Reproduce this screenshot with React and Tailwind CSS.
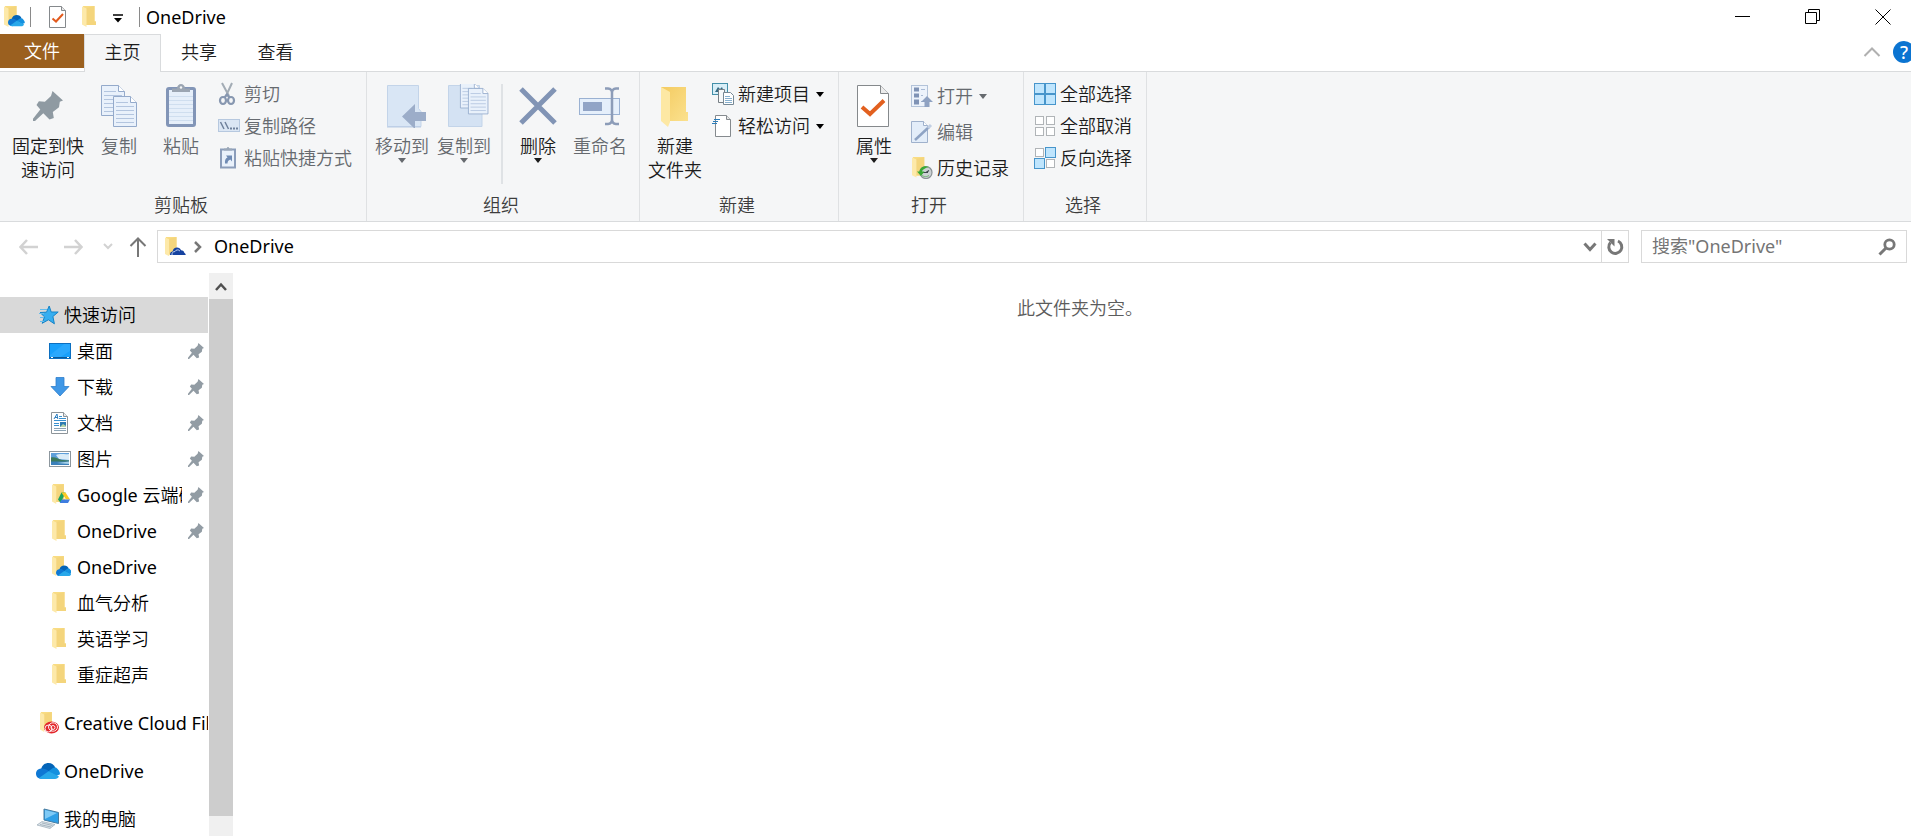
import React from "react";

/* ---------- shared shapes ---------- */

function FolderShape({ x = 0, y = 0, s = 1 }) {
  return (
    <g transform={`translate(${x} ${y}) scale(${s})`}>
      <path d="M1 0h11.500v15.500h1.500v3.500H4z" fill="#f9dc83" />
      <path d="M4 2l8.500-2v15.500h1.500v3.500H4z" fill="#f4d57c" />
      <path d="M0 0.500L4.500 2.500V21L0 18.500z" fill="#fde9a9" />
    </g>
  );
}

function CloudShape({ x = 0, y = 0, s = 1 }) {
  return (
    <g transform={`translate(${x} ${y}) scale(${s})`}>
      <path d="M5 6.500C6 2 9 0 12.500 0c3.200 0 5.600 1.700 6.800 4.600L13 9z" fill="#0364b8" />
      <path d="M5 5.500c2.500-.4 4.500.5 6.500 1.700L17 10.500 6 16c-3.800 0-6-2.200-6-5.200C0 7.800 2.200 5.700 5 5.500z" fill="#0f78d4" />
      <path d="M12.500 8.200l4-3c1-.7 2.300-.9 3.500-.6 2.300 2 4 3.900 4 6.700l-4 2z" fill="#1490df" />
      <path d="M3 15l9.500-6.800L23 13.500c-.8 1.600-2.200 2.500-4 2.500H6c-1.200 0-2.200-.4-3-1z" fill="#28a8ea" />
    </g>
  );
}

function PinShape({ fill = "#8f9aa2" }) {
  return <path d="M19.500 0L30 9.500l-3.200 1.300-.8 5.500-6.200 4.800 1 6-4.300 1.400-6.200-6.300L2 30H0v-2.200l7.300-9.300L3.500 14l2.400-3.800 6 .5L18 5z" fill={fill} />;
}

/* ---------- small icons (22px) ---------- */

const FolderIcon = () => (
  <svg width="22" height="22" viewBox="0 0 22 22" aria-hidden="true" className="shrink-0"><FolderShape x={3} y={0} /></svg>
);
const OneDriveFolderIcon = () => (
  <svg width="22" height="22" viewBox="0 0 22 22" aria-hidden="true" className="shrink-0"><FolderShape x={3} y={0} s={0.95} /><CloudShape x={7} y={9.500} s={0.66} /></svg>
);
const AddressIcon = () => (
  <svg width="22" height="22" viewBox="0 0 22 22" aria-hidden="true" className="shrink-0">
    <FolderShape x={1} y={1} s={0.92} />
    <path d="M6 18.500c0-2 1.300-3 2.600-3 .4-2.500 2-4 4.400-4 2 0 3.300 1 4 2.700 2 0 3.200 1.300 3.400 2.700.8.300 1.300 1 1.300 2H6z" fill="#1542a0" />
    <path d="M8 19c-.2-2 1-3.600 2.900-3.400.8-2 3.800-2.300 5-.6" fill="none" stroke="#d5e3fa" strokeWidth="0.900" />
  </svg>
);
const DriveFolderIcon = () => (
  <svg width="22" height="22" viewBox="0 0 22 22" aria-hidden="true" className="shrink-0">
    <FolderShape x={3} y={0} s={0.95} />
    <path d="M12.500 8.500h4L11.700 19 9 15.500z" fill="#1ea362" />
    <path d="M12.500 8.500h4l4.500 7h-4z" fill="#fbc926" />
    <path d="M10.600 19l2.200-3.500H21L19 19z" fill="#3f7de0" />
  </svg>
);
const StarIcon = () => (
  <svg width="22" height="22" viewBox="0 0 22 22" aria-hidden="true" className="shrink-0">
    <path d="M12.200 2l2 6h7l-5.300 4.500 1.500 7.300-6-4-6.200 3.500 2.300-6.500L3 8.500l6.500-.3z" fill="#36aef0" stroke="#1583c6" strokeWidth="1" />
    <path d="M3 5.500h7M2 9.500h5M3 13.500h4M3 17.500h4" stroke="#66bdec" strokeWidth="1" />
  </svg>
);
const DesktopIcon = () => (
  <svg width="22" height="22" viewBox="0 0 22 22" aria-hidden="true" className="shrink-0">
    <rect x="0.500" y="3.500" width="21" height="15" fill="#18a0fb" stroke="#0c6fc0" />
    <path d="M1 15L15 4h6v7l-11 7H1z" fill="#3bb0ff" opacity="0.500" />
    <path d="M1 17.500h20" stroke="#0b5896" /><path d="M2 17.500h2M18 17.500h2" stroke="#fff" />
  </svg>
);
const DownloadIcon = () => (
  <svg width="22" height="22" viewBox="0 0 22 22" aria-hidden="true" className="shrink-0"><path d="M7 1.500h8v9h5L11 20 2 10.500h5z" fill="#3f97e6" stroke="#2e7dcb" strokeWidth="0.800" /></svg>
);
const DocumentsIcon = () => (
  <svg width="22" height="22" viewBox="0 0 22 22" aria-hidden="true" className="shrink-0">
    <path d="M2.500 0.500h12l4 4v17h-16z" fill="#fff" stroke="#8d9499" /><path d="M14.500 0.500v4h4" fill="#e6e9eb" stroke="#8d9499" />
    <path d="M5 7l3-5 .8 5M6 5.500h3" fill="none" stroke="#2d7ec0" />
    <path d="M10 4.500h3M10 6.500h7M5 8.500h12M5 11.500h5M5 13.500h5" stroke="#3a91cf" /><path d="M5 16.500h12M5 18.500h12" stroke="#8ca4b5" />
    <rect x="11" y="10" width="6" height="5" fill="#2f7db3" /><path d="M11 15l3-3 3 2v1z" fill="#b6d5a8" />
  </svg>
);
const PicturesIcon = () => (
  <svg width="22" height="22" viewBox="0 0 22 22" aria-hidden="true" className="shrink-0">
    <rect x="0.500" y="3.500" width="21" height="15" fill="#fff" stroke="#8d979e" />
    <rect x="2" y="5" width="18" height="12" fill="#5e9fda" /><path d="M7 7c5-2 9 0 13-1v6l-10-1z" fill="#d9ebf7" />
    <path d="M2 9.500c4-1 7 1.500 11 2.500l7 .5V14H2z" fill="#3c7a5e" /><path d="M2 13.500h18V17H2z" fill="#3b80ba" /><path d="M8 15l12-1.500V16z" fill="#a8d2ea" />
  </svg>
);
const CreativeIcon = () => (
  <svg width="22" height="22" viewBox="0 0 22 22" aria-hidden="true" className="shrink-0">
    <FolderShape x={3} y={0} s={0.95} />
    <ellipse cx="14.500" cy="15.500" rx="7.500" ry="6" fill="#e3262b" />
    <g fill="none" stroke="#fff" strokeWidth="0.900"><circle cx="11.500" cy="16.500" r="3.500" /><ellipse cx="16" cy="15" rx="4.500" ry="4.200" /><circle cx="16" cy="15.500" r="2" /></g>
  </svg>
);
const OneDriveIcon = () => (
  <svg width="24" height="22" viewBox="0 0 24 22" aria-hidden="true" className="shrink-0"><CloudShape x={0} y={3} /></svg>
);
const ComputerIcon = () => (
  <svg width="22" height="22" viewBox="0 0 22 22" aria-hidden="true" className="shrink-0">
    <path d="M7 1l14.500 3.500v11L7 12z" fill="#2f9fe6" stroke="#477b9f" /><path d="M8 2l12 3-12 6z" fill="#7fcaf6" />
    <path d="M0 17l5-3.500 13 3-5 4z" fill="#dce4e9" stroke="#98a9b5" strokeWidth="0.700" /><path d="M3 16.500l11 2.500M5 15l10.500 2.500" stroke="#8fa1ae" strokeWidth="0.700" />
  </svg>
);
const CheckDocIcon = () => (
  <svg width="18" height="22" viewBox="0 0 18 22" aria-hidden="true">
    <path d="M0.500 0.500h12l4 4v17h-16z" fill="#fff" stroke="#85898c" /><path d="M12.500 0.500v4h4" fill="#e8e8e8" stroke="#85898c" />
    <path d="M3.500 12.500l3.500 3 7-7.500" fill="none" stroke="#e25a1d" strokeWidth="2" />
  </svg>
);

const CutIcon = () => (
  <svg width="22" height="24" viewBox="0 0 22 24" aria-hidden="true" className="shrink-0">
    <path d="M4 1l7 13M14 1L8 14" stroke="#a3acb5" strokeWidth="2" fill="none" />
    <g fill="none" stroke="#8797b0" strokeWidth="2.200"><ellipse cx="5" cy="18.500" rx="3" ry="3.500" /><ellipse cx="13" cy="18.500" rx="3" ry="3.500" /><path d="M6.500 15.500l2.500-3 2.500 3" /></g>
  </svg>
);
const PathIcon = () => (
  <svg width="22" height="22" viewBox="0 0 22 22" aria-hidden="true" className="shrink-0">
    <rect x="0.500" y="4.500" width="21" height="12" fill="#dbe6f4" stroke="#b6c8df" /><path d="M2.500 7l3.500 7M7 7l3.500 7" stroke="#70819c" strokeWidth="1.500" />
    <path d="M12 13.500h2M15 13.500h2M18 13.500h2" stroke="#70819c" strokeWidth="2" />
  </svg>
);
const PasteLinkIcon = () => (
  <svg width="22" height="22" viewBox="0 0 22 22" aria-hidden="true" className="shrink-0">
    <rect x="3" y="2.500" width="14" height="18" fill="#e9f1fb" stroke="#8b9dba" strokeWidth="2" /><path d="M6 3.500V1.500h2.500l1-1.500h1l1 1.500H14v2z" fill="#9aa7b8" />
    <path d="M7 16.500c-.3-3.500.5-5 2.500-6L8 8.500h6v6L12.300 12.500c-2 .7-2.800 2-2.800 4z" fill="#6f8bb4" />
  </svg>
);
const NewItemIcon = () => (
  <svg width="22" height="22" viewBox="0 0 22 22" aria-hidden="true" className="shrink-0">
    <rect x="0.500" y="0.500" width="15" height="11" fill="#d8eef7" stroke="#438fa9" /><path d="M3 9l3-5 2 2 2-2 2 5z" fill="#356b84" />
    <path d="M6.500 6.500h6v13h-6z" fill="#f7f9fa" stroke="#777f85" />
    <path d="M11.500 9.500h7l3 3v9h-10z" fill="#fff" stroke="#768894" /><path d="M13 13.500h5M13 15.500h7M13 17.500h7M13 19.500h7" stroke="#87b0ce" />
  </svg>
);
const EasyAccessIcon = () => (
  <svg width="22" height="22" viewBox="0 0 22 22" aria-hidden="true" className="shrink-0">
    <path d="M3.500 0.500h11l4 4v17h-15z" fill="#fff" stroke="#858a8e" /><path d="M14.500 0.500v4h4" fill="#e6e6e6" stroke="#858a8e" />
    <path d="M2 4.500h6M1 6.500h5M0 8.500h5" stroke="#2b7cb9" strokeWidth="1.200" />
  </svg>
);
const OpenIcon = () => (
  <svg width="22" height="22" viewBox="0 0 22 22" aria-hidden="true" className="shrink-0">
    <rect x="0.500" y="0.500" width="16" height="21" fill="#edf3fb" stroke="#b3c3d9" />
    <path d="M3 2.500h5v4H3zM3 8.500h5v4H3zM3 14.500h5v5H3z" fill="#8093b5" /><path d="M10 4.500h4M10 10.500h2M10 16.500h2" stroke="#a9bbd5" />
    <path d="M16 11l6 6h-3.500v5h-5v-5H10z" fill="#8fa2c2" />
  </svg>
);
const EditIcon = () => (
  <svg width="22" height="22" viewBox="0 0 22 22" aria-hidden="true" className="shrink-0">
    <path d="M0.500 0.500h12l4 4v17h-16z" fill="#e3edf9" stroke="#9fb1cc" /><path d="M12.500 0.500v4h4" fill="#fff" stroke="#9fb1cc" />
    <path d="M4 19L18 6" stroke="#8ea3c4" strokeWidth="2.500" /><path d="M17 7l3-3" stroke="#c1cfe3" strokeWidth="3" />
  </svg>
);
const HistoryIcon = () => (
  <svg width="22" height="22" viewBox="0 0 22 22" aria-hidden="true" className="shrink-0">
    <FolderShape x={1} y={0} s={0.98} />
    <circle cx="15" cy="15.500" r="6" fill="#cbd1d3" stroke="#8a9296" strokeWidth="1.200" />
    <path d="M12 15.500h5M15 15.500l3-2" stroke="#3e474d" strokeWidth="1.200" />
    <path d="M18 10c-5-2-9 .5-9.500 4.500H6l4 4.500 3.500-4.500H11c.5-2 3-3.500 7-4.500z" fill="#39a935" />
    <path d="M11 18c1 1.500 4 2.500 7 .5" stroke="#74b877" strokeWidth="1" fill="none" />
  </svg>
);

function SquaresIcon({ on }) {
  const spots = [[0, 0], [11, 0], [0, 11], [11, 11]];
  return (
    <svg width="22" height="22" viewBox="0 0 22 22" aria-hidden="true" className="shrink-0">
      {spots.map(([x, y], i) =>
        on[i] ? (
          <rect key={i} x={x + 0.500} y={y + 0.500} width="10" height="10" fill="#bfe5fd" stroke="#4795cb" />
        ) : (
          <rect key={i} x={x + 1.500} y={y + 1.500} width="8" height="8" fill="#fff" stroke="#b0b4b7" />
        )
      )}
    </svg>
  );
}

/* ---------- large icons ---------- */

const BigPin = () => (
  <svg width="30" height="30" viewBox="0 0 30 30" aria-hidden="true"><PinShape /></svg>
);

function PageShape({ x, y }) {
  return (
    <g transform={`translate(${x} ${y})`}>
      <path d="M0.500 0.500h17l6 6v24h-23z" fill="#e9f1fb" stroke="#94aacb" />
      <path d="M17.500 0.500v6h6" fill="#fff" stroke="#94aacb" />
      <path d="M3 6.500h12M3 10.500h18M3 14.500h18M3 18.500h18M3 22.500h18M3 26.500h18" stroke="#b3c5df" />
    </g>
  );
}
const CopyIcon = () => (
  <svg width="38" height="44" viewBox="0 0 38 44" aria-hidden="true"><PageShape x={1} y={1} /><PageShape x={13} y={12} /></svg>
);
const PasteIcon = () => (
  <svg width="32" height="44" viewBox="0 0 32 44" aria-hidden="true">
    <rect x="2.500" y="4.500" width="27" height="37" rx="1.500" fill="#e6effa" stroke="#8295b7" strokeWidth="3" />
    <path d="M4 12.500h24M4 16.500h24M4 20.500h24M4 24.500h24M4 28.500h24M4 32.500h24M4 36.500h24" stroke="#cfdeef" />
    <path d="M7 8V4.500h5C12 1.500 14 0 16 0s4 1.500 4 4.500h5V8z" fill="#9ba5b2" /><circle cx="16" cy="3.500" r="1.200" fill="#f5f6f7" />
  </svg>
);
const MoveToIcon = () => (
  <svg width="50" height="44" viewBox="-8 0 50 44" aria-hidden="true">
    <path d="M2.500 1.500h31v23l2.500 3v15H2.500z" fill="#d9e6f5" stroke="#c3d4e9" /><path d="M2 43h34" stroke="#b9cbe4" />
    <path d="M30 20v8h11v9H30v8L17 32.500z" fill="#9cadc9" />
  </svg>
);
const CopyToIcon = () => (
  <svg width="50" height="44" viewBox="-8 0 50 44" aria-hidden="true">
    <path d="M1.500 1.500h31v23l2.500 3v15H1.500z" fill="#d4e2f3" stroke="#c3d4e9" />
    <g transform="translate(13 -1) scale(.82)"><PageShape x={0} y={0} /></g>
    <g transform="translate(21 4) scale(.85)"><PageShape x={0} y={0} /></g>
  </svg>
);
const DeleteIcon = () => (
  <svg width="40" height="44" viewBox="0 0 40 44" aria-hidden="true"><path d="M3 5l34 34M37 5L3 39" stroke="#8194b5" strokeWidth="5" /></svg>
);
const RenameIcon = () => (
  <svg width="44" height="44" viewBox="0 0 44 44" aria-hidden="true">
    <rect x="1.500" y="14.500" width="40" height="16" fill="#e5effb" stroke="#9ab1d2" /><rect x="5" y="18" width="19" height="9" fill="#91a4c6" />
    <path d="M27 4.500h3q4 .5 4 4v27q0 4-4 4.500h-3M41 4.500h-3q-4 .5-4 4v27q0 4 4 4.500h3" fill="none" stroke="#8c9cb8" strokeWidth="2.500" />
  </svg>
);
const NewFolderIcon = () => (
  <svg width="30" height="44" viewBox="0 0 30 44" aria-hidden="true">
    <defs><linearGradient id="folderFill" x1="0" y1="0" x2="1" y2="1"><stop offset="0" stopColor="#f4cb61" /><stop offset="1" stopColor="#fbe18e" /></linearGradient></defs>
    <path d="M1 3h25v25h2v9H8z" fill="url(#folderFill)" /><path d="M1 3l9 5v30l-2 5-7-6z" fill="#fde8a4" />
  </svg>
);
const PropertiesIcon = () => (
  <svg width="34" height="44" viewBox="0 0 34 44" aria-hidden="true">
    <path d="M0.500 1.500h23l8 8v33h-31z" fill="#fff" stroke="#85898c" /><path d="M23.500 1.500v8h8" fill="#ececec" stroke="#85898c" />
    <path d="M5 23l8 7 14-13.500" fill="none" stroke="#e2601f" strokeWidth="4" />
  </svg>
);

/* ---------- ribbon pieces ---------- */

const Caret = () => (
  <svg width="8" height="5" viewBox="0 0 8 5" aria-hidden="true" className="shrink-0"><path d="M0 0h8L4 5z" fill="currentColor" /></svg>
);

function BigButton({ icon, lines, muted, caret, wide }) {
  return (
    <button type="button" className={`flex flex-col items-center ${wide ? "w-20" : "w-[62px]"} ${muted ? "text-[#666a6f]" : "text-[#1c1c1c]"}`}>
      <span className="mb-1.5 flex h-11 items-center justify-center">{icon}</span>
      {lines.map((line) => (
        <span key={line} className="block leading-6 whitespace-nowrap">{line}</span>
      ))}
      {caret && <Caret />}
    </button>
  );
}

function SmallButton({ icon, label, muted, caret, tall }) {
  return (
    <button type="button" className={`flex items-center gap-1 whitespace-nowrap ${tall ? "h-9" : "h-8"} ${muted ? "text-[#666a6f]" : "text-[#1c1c1c]"}`}>
      {icon}
      <span>{label}</span>
      {caret && <span className={muted ? "ml-0.5" : "ml-0.5 text-black"}><Caret /></span>}
    </button>
  );
}

function Group({ label, className, children }) {
  return (
    <section aria-label={label} className="flex flex-col justify-between border-r border-[#dfe1e3] pb-1">
      <div className={`flex items-start pt-1.5 ${className}`}>{children}</div>
      <h2 className="pr-1 text-center leading-6 text-[#3d3d3d]">{label}</h2>
    </section>
  );
}

function Ribbon() {
  return (
    <div className="flex h-[151px] shrink-0 border-y border-[#d9dbdd] bg-[#f5f6f7]">
      <Group label="剪贴板" className="pr-3.5 pl-2">
        <div className="flex items-start pt-1.5">
          <BigButton wide icon={<BigPin />} lines={["固定到快", "速访问"]} />
          <BigButton muted icon={<CopyIcon />} lines={["复制"]} />
          <BigButton muted icon={<PasteIcon />} lines={["粘贴"]} />
        </div>
        <div className="flex flex-col pl-1.5">
          <SmallButton muted icon={<CutIcon />} label="剪切" />
          <SmallButton muted icon={<PathIcon />} label="复制路径" />
          <SmallButton muted icon={<PasteLinkIcon />} label="粘贴快捷方式" />
        </div>
      </Group>
      <Group label="组织" className="pr-2 pl-1">
        <div className="flex items-start pt-1.5">
          <BigButton muted caret icon={<MoveToIcon />} lines={["移动到"]} />
          <BigButton muted caret icon={<CopyToIcon />} lines={["复制到"]} />
          <div className="mr-1 ml-1.5 h-[100px] w-0.5 bg-[#dfe2e5]" />
          <BigButton caret icon={<DeleteIcon />} lines={["删除"]} />
          <BigButton muted icon={<RenameIcon />} lines={["重命名"]} />
        </div>
      </Group>
      <Group label="新建" className="pr-3.5 pl-1">
        <div className="pt-1.5">
          <BigButton icon={<NewFolderIcon />} lines={["新建", "文件夹"]} />
        </div>
        <div className="flex flex-col pl-1.5">
          <SmallButton caret icon={<NewItemIcon />} label="新建项目" />
          <SmallButton caret icon={<EasyAccessIcon />} label="轻松访问" />
        </div>
      </Group>
      <Group label="打开" className="pr-3.5 pl-1">
        <div className="pt-1.5">
          <BigButton caret icon={<PropertiesIcon />} lines={["属性"]} />
        </div>
        <div className="flex flex-col pl-1.5">
          <SmallButton tall muted caret icon={<OpenIcon />} label="打开" />
          <SmallButton tall muted icon={<EditIcon />} label="编辑" />
          <SmallButton tall icon={<HistoryIcon />} label="历史记录" />
        </div>
      </Group>
      <Group label="选择" className="pr-3.5 pl-2.5">
        <div className="flex flex-col">
          <SmallButton icon={<SquaresIcon on={[true, true, true, true]} />} label="全部选择" />
          <SmallButton icon={<SquaresIcon on={[false, false, false, false]} />} label="全部取消" />
          <SmallButton icon={<SquaresIcon on={[false, true, true, false]} />} label="反向选择" />
        </div>
      </Group>
    </div>
  );
}

/* ---------- title bar and tabs ---------- */

function TitleBar() {
  return (
    <header className="flex h-[34px] shrink-0 items-center">
      <div className="flex items-center pl-1">
        <svg width="22" height="22" viewBox="0 0 22 22" aria-hidden="true"><FolderShape x={0} y={0} /><CloudShape x={4} y={9} s={0.700} /></svg>
        <span className="ml-1 h-5 w-px bg-[#8a8a8a]" />
        <button type="button" aria-label="属性" className="ml-[18px]"><CheckDocIcon /></button>
        <button type="button" aria-label="新建文件夹" className="ml-3"><FolderIcon /></button>
        <button type="button" aria-label="自定义快速访问工具栏" className="ml-3">
          <svg width="10" height="10" viewBox="0 0 10 10" aria-hidden="true" className="mt-1"><path d="M0 1h10" stroke="#000" strokeWidth="1.500" /><path d="M1 4h8L5 8.500z" /></svg>
        </button>
        <span className="ml-4 h-5 w-px bg-[#8a8a8a]" />
      </div>
      <h1 className="ml-1.5 font-normal text-black">OneDrive</h1>
      <div className="ml-auto flex gap-3.5">
        <button type="button" aria-label="最小化" className="flex h-8 w-14 items-center justify-center">
          <svg width="16" height="16" viewBox="0 0 16 16" aria-hidden="true"><path d="M0 7.500h15" stroke="#000" /></svg>
        </button>
        <button type="button" aria-label="还原" className="flex h-8 w-14 items-center justify-center">
          <svg width="16" height="16" viewBox="0 0 16 16" fill="none" stroke="#000" aria-hidden="true"><path d="M0.500 3.500h11v11h-11zM3.500 3V0.500h11v11H12" /></svg>
        </button>
        <button type="button" aria-label="关闭" className="flex h-8 w-14 items-center justify-center">
          <svg width="16" height="16" viewBox="0 0 16 16" stroke="#000" aria-hidden="true"><path d="M0.500 0.500l15 15M15.500 0.500l-15 15" /></svg>
        </button>
      </div>
    </header>
  );
}

function Tabs() {
  return (
    <nav aria-label="功能区选项卡" className="flex h-[37px] shrink-0 items-start">
      <button type="button" className="h-[34px] w-21 bg-[#9b601f] text-white">文件</button>
      <button type="button" className="relative -mb-px h-[38px] w-[77px] border-x border-t border-[#d9dbdd] bg-[#f5f6f7] pb-1 text-[#1c1c1c]">主页</button>
      <button type="button" className="h-9 w-[76px] text-[#1c1c1c]">共享</button>
      <button type="button" className="h-9 w-[77px] text-[#1c1c1c]">查看</button>
      <div className="ml-auto flex h-9 items-center gap-3">
        <button type="button" aria-label="折叠功能区">
          <svg width="18" height="10" viewBox="0 0 18 10" aria-hidden="true"><path d="M1.500 9L9 1.500 16.500 9" fill="none" stroke="#b0b0b0" strokeWidth="2" /></svg>
        </button>
        <button type="button" aria-label="帮助" className="-mr-1 flex size-[22px] items-center justify-center rounded-full bg-[#0b74d1] font-medium text-white">?</button>
      </div>
    </nav>
  );
}

/* ---------- address row ---------- */

function AddressBar() {
  return (
    <div className="flex shrink-0 items-center pt-2 pr-1 pb-2.5 pl-[19px]">
      <button type="button" aria-label="后退"><svg width="19" height="16" viewBox="0 0 19 16" aria-hidden="true"><path d="M8 1L1.500 8 8 15M2 8h17" fill="none" stroke="#d2d2d2" strokeWidth="2.500" /></svg></button>
      <button type="button" aria-label="前进" className="ml-6.5"><svg width="19" height="16" viewBox="0 0 19 16" aria-hidden="true"><path d="M11 1l6.500 7-6.500 7M17 8H0" fill="none" stroke="#d2d2d2" strokeWidth="2.500" /></svg></button>
      <button type="button" aria-label="最近浏览的位置" className="ml-5"><svg width="10" height="7" viewBox="0 0 10 7" aria-hidden="true"><path d="M1 1l4 4 4-4" fill="none" stroke="#d2d2d2" strokeWidth="2" /></svg></button>
      <button type="button" aria-label="上移" className="ml-4"><svg width="18" height="20" viewBox="0 0 18 20" aria-hidden="true"><path d="M1.500 9L9 1.500 16.500 9M9 2v18" fill="none" stroke="#777" strokeWidth="2" /></svg></button>
      <div className="ml-2.5 flex h-[33px] flex-1 items-center border border-[#d9d9d9] pl-1.5">
        <AddressIcon />
        <svg width="8" height="12" viewBox="0 0 8 12" aria-hidden="true" className="ml-2"><path d="M1 1l5 5-5 5" fill="none" stroke="#777" strokeWidth="2.500" /></svg>
        <a href="#onedrive" className="ml-3 pb-0.5 font-normal text-black">OneDrive</a>
        <button type="button" aria-label="以前的位置" className="mr-1 ml-auto"><svg width="14" height="10" viewBox="0 0 14 10" aria-hidden="true"><path d="M1.500 1.500L7 7.500l5.500-6" fill="none" stroke="#777" strokeWidth="3" /></svg></button>
        <button type="button" aria-label="刷新" className="flex h-full w-[27px] items-center justify-center border-l border-[#d9d9d9]">
          <svg width="18" height="18" viewBox="0 0 18 18" aria-hidden="true"><path d="M12 3A6.500 6.500 0 1 1 4.500 4.500" fill="none" stroke="#777" strokeWidth="3" /><path d="M1 1h7.500v7.500z" fill="#777" /></svg>
        </button>
      </div>
      <form role="search" className="ml-3 flex h-[33px] w-[266px] items-center border border-[#d9d9d9] pr-2.5 pl-2.5" onSubmit={(e) => e.preventDefault()}>
        <input type="search" aria-label="搜索 OneDrive" placeholder={'搜索"OneDrive"'} className="min-w-0 flex-1 bg-transparent pb-0.5 font-normal outline-none placeholder:text-[#757575]" />
        <button type="submit" aria-label="搜索">
          <svg width="18" height="18" viewBox="0 0 18 18" aria-hidden="true"><circle cx="11.500" cy="6.500" r="4.700" fill="none" stroke="#777" strokeWidth="2.800" /><path d="M8 10l-6.500 6.500" stroke="#777" strokeWidth="3" /></svg>
        </button>
      </form>
    </div>
  );
}

/* ---------- navigation pane ---------- */

const quickItems = [
  { id: "desktop", label: "桌面", Icon: DesktopIcon, pinned: true },
  { id: "downloads", label: "下载", Icon: DownloadIcon, pinned: true },
  { id: "documents", label: "文档", Icon: DocumentsIcon, pinned: true },
  { id: "pictures", label: "图片", Icon: PicturesIcon, pinned: true },
  { id: "gdrive", latin: "Google ", label: "云端硬盘", Icon: DriveFolderIcon, pinned: true },
  { id: "onedrive-pinned", latin: "OneDrive", Icon: FolderIcon, pinned: true },
  { id: "onedrive-recent", latin: "OneDrive", Icon: OneDriveFolderIcon },
  { id: "blood-gas", label: "血气分析", Icon: FolderIcon },
  { id: "english", label: "英语学习", Icon: FolderIcon },
  { id: "ultrasound", label: "重症超声", Icon: FolderIcon },
];

function NavRow({ item, top, selected }) {
  const { Icon } = item;
  return (
    <a
      href={`#${item.id}`}
      className={`flex h-9 items-center pr-1 text-black ${top ? "gap-1 pl-9" : "gap-1.5 pl-[49px]"} ${selected ? "bg-[#d9d9d9]" : ""}`}
    >
      <span className={top ? "flex w-6 shrink-0 justify-center" : "flex w-[22px] shrink-0"}><Icon /></span>
      <span className={`min-w-0 flex-1 overflow-hidden whitespace-nowrap ${top ? "-mr-1" : ""}`}>
        {item.latin && <span className="font-normal">{item.latin}</span>}
        {item.label}
      </span>
      {item.pinned && (
        <svg width="16" height="16" viewBox="0 0 30 30" aria-hidden="true" className="shrink-0"><PinShape fill="#929ca4" /></svg>
      )}
    </a>
  );
}

function NavPane() {
  return (
    <aside className="flex w-[233px] shrink-0 overflow-hidden">
      <nav aria-label="导航窗格" className="mr-px w-52 shrink-0 pt-6">
        <NavRow top selected item={{ id: "quick", label: "快速访问", Icon: StarIcon }} />
        <ul>
          {quickItems.map((item) => (
            <li key={item.id}><NavRow item={item} /></li>
          ))}
        </ul>
        <div className="mt-3 flex flex-col gap-3">
          <NavRow top item={{ id: "creative", latin: "Creative Cloud Files", Icon: CreativeIcon }} />
          <NavRow top item={{ id: "onedrive", latin: "OneDrive", Icon: OneDriveIcon }} />
          <NavRow top item={{ id: "computer", label: "我的电脑", Icon: ComputerIcon }} />
        </div>
      </nav>
      <div className="flex flex-1 flex-col bg-[#f0f0f0] pb-5">
        <button type="button" aria-label="向上滚动" className="flex h-[26px] shrink-0 items-center justify-center">
          <svg width="12" height="9" viewBox="0 0 12 9" aria-hidden="true"><path d="M1 8l5-5.500L11 8" fill="none" stroke="#505050" strokeWidth="2.500" /></svg>
        </button>
        <div className="flex-1 bg-[#cdcdcd]" />
      </div>
    </aside>
  );
}

export default function App() {
  return (
    <div className="flex h-screen flex-col overflow-hidden bg-white font-['Noto_Sans','Noto_Sans_CJK_SC',sans-serif] text-lg leading-6 font-[350]">
      <TitleBar />
      <Tabs />
      <Ribbon />
      <AddressBar />
      <div className="flex min-h-0 flex-1">
        <NavPane />
        <main className="min-w-0 flex-1 pt-[23px] pl-4">
          <p className="text-center text-[#5c5c5c]">此文件夹为空。</p>
        </main>
      </div>
    </div>
  );
}
